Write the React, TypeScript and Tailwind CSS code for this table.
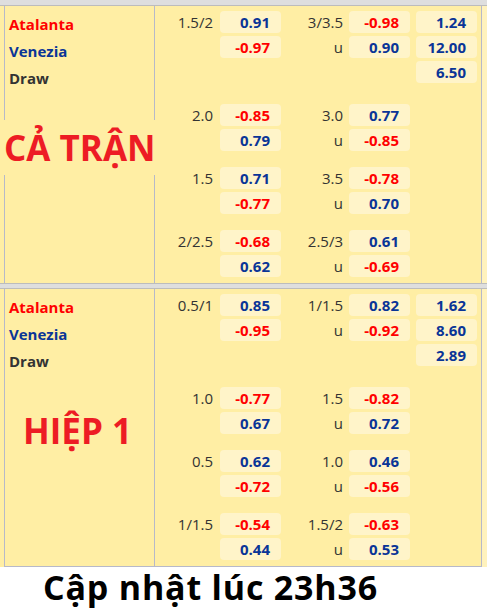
import React from 'react'

type Group = {
  hdp: string
  home: string
  away: string
  ou: string
  over: string
  under: string
  x12?: string[]
}

const FULL: Group[] = [
  { hdp: '1.5/2', home: '0.91', away: '-0.97', ou: '3/3.5', over: '-0.98', under: '0.90', x12: ['1.24', '12.00', '6.50'] },
  { hdp: '2.0', home: '-0.85', away: '0.79', ou: '3.0', over: '0.77', under: '-0.85' },
  { hdp: '1.5', home: '0.71', away: '-0.77', ou: '3.5', over: '-0.78', under: '0.70' },
  { hdp: '2/2.5', home: '-0.68', away: '0.62', ou: '2.5/3', over: '0.61', under: '-0.69' },
]

const HALF: Group[] = [
  { hdp: '0.5/1', home: '0.85', away: '-0.95', ou: '1/1.5', over: '0.82', under: '-0.92', x12: ['1.62', '8.60', '2.89'] },
  { hdp: '1.0', home: '-0.77', away: '0.67', ou: '1.5', over: '-0.82', under: '0.72' },
  { hdp: '0.5', home: '0.62', away: '-0.72', ou: '1.0', over: '0.46', under: '-0.56' },
  { hdp: '1/1.5', home: '-0.54', away: '0.44', ou: '1.5/2', over: '-0.63', under: '0.53' },
]

function Odd({ v, blue }: { v?: string; blue?: boolean }) {
  if (!v) return <div className="w-[61px] h-[22px]" />
  const neg = v.startsWith('-') && !blue
  return (
    <div
      className={`w-[61px] h-[22px] rounded-[4px] bg-[#fff4c9] text-right pr-[11px] text-[15px] leading-[22px] font-bold ${
        neg ? 'text-[#ff0000]' : 'text-[#0a3597]'
      }`}
    >
      {v}
    </div>
  )
}

function Label({ t, w }: { t?: string; w: string }) {
  return <div className={`${w} h-[22px] text-right text-[15px] leading-[22px] text-[#333]`}>{t}</div>
}

function Line({ hdp, a, ou, b, c }: { hdp?: string; a?: string; ou?: string; b?: string; c?: string }) {
  return (
    <div className="flex items-center">
      <Label t={hdp} w="w-[65px] pr-[7px]" />
      <Odd v={a} />
      <Label t={ou} w="w-[68px] pr-[6px]" />
      <Odd v={b} />
      <div className="w-[6px]" />
      <Odd v={c} blue />
    </div>
  )
}

function Section({ title, groups, wide }: { title: string; groups: Group[]; wide?: boolean }) {
  return (
    <div className="flex bg-[#ffeea4] pl-1">
      <div className="flex w-[478px] h-[277px] border-x border-[#b7b9c9]">
        {/* teams + title */}
        <div className="w-[150px] shrink-0 border-r border-[#b7b9c9] self-stretch">
          <div className="pt-[5px] pl-[4px] text-[15px] leading-[27px] font-bold">
            <div className="text-[#ff0000]">Atalanta</div>
            <div className="text-[#0a3597]">Venezia</div>
            <div className="text-[#333]">Draw</div>
          </div>
          <div
            className={`relative mt-[28px] h-[55px] text-[35px] leading-[55px] font-bold text-[#ed1c24] whitespace-nowrap ${
              wide ? 'w-[156px] bg-[#ffeea4] pl-0 -ml-[1px]' : 'pl-[18px]'
            }`}
          >
            {title}
          </div>
        </div>

        {/* odds */}
        <div className="flex flex-col gap-4 pt-[5px]">
          {groups.map((g, i) => (
            <div key={i} className={`flex flex-col gap-[3px] ${g.x12 ? 'mb-[5px]' : ''}`}>
              <Line hdp={g.hdp} a={g.home} ou={g.ou} b={g.over} c={g.x12?.[0]} />
              <Line a={g.away} ou="u" b={g.under} c={g.x12?.[1]} />
              {g.x12 && <Line c={g.x12[2]} />}
            </div>
          ))}
        </div>
      </div>
      <div className="flex-1 bg-[#fff2bd]" />
    </div>
  )
}

export default function App() {
  return (
    <div className="w-[487px] h-[609px] bg-white font-['Open_Sans',sans-serif] overflow-hidden">
      <div className="h-[6px] bg-[#dedede] border-b border-[#bcbcbc]" />
      <Section title="CẢ TRẬN" groups={FULL} wide />
      <div className="h-[6px] bg-[#dedede] border-y border-[#bcbcbc]" />
      <Section title="HIỆP 1" groups={HALF} />
      <div className="flex bg-[#ffeea4] pl-1">
        <div className="w-[478px] h-px bg-[#b7b9c9]" />
        <div className="flex-1 bg-[#fff2bd]" />
      </div>
      <div className="pl-[43px] text-[34px] leading-[41px] font-bold tracking-[0.8px] text-black">Cập nhật lúc 23h36</div>
    </div>
  )
}
